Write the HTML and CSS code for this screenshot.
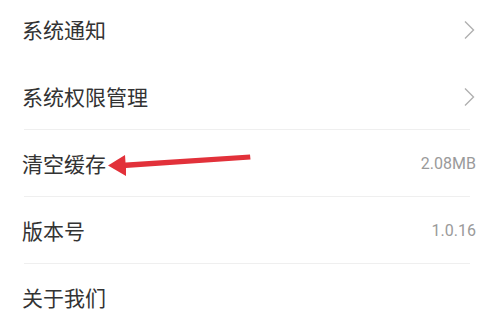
FILE: index.html
```html
<!DOCTYPE html>
<html lang="zh-CN">
<head>
  <meta charset="UTF-8">
  <meta name="viewport" content="width=device-width, initial-scale=1.0">
  <title>设置</title>
  <link rel="stylesheet" href="styles.css">
</head>
<body>
  <div class="settings">
    <div class="item">
      <span class="label">系统通知</span>
      <svg class="chevron" width="12" height="20" viewBox="0 0 12 20">
        <path d="M2 1.5 L10.5 10 L2 18.5" fill="none" stroke="#b0b0b0" stroke-width="1.4"/>
      </svg>
    </div>
    <div class="item line">
      <span class="label">系统权限管理</span>
      <svg class="chevron" width="12" height="20" viewBox="0 0 12 20">
        <path d="M2 1.5 L10.5 10 L2 18.5" fill="none" stroke="#b0b0b0" stroke-width="1.4"/>
      </svg>
    </div>
    <div class="item line">
      <span class="label">清空缓存</span>
      <span class="value">2.08MB</span>
    </div>
    <div class="item line">
      <span class="label">版本号</span>
      <span class="value">1.0.16</span>
    </div>
    <div class="item">
      <span class="label">关于我们</span>
    </div>

    <!-- red pointer drawn over the screenshot -->
    <svg class="pointer" width="496" height="324" viewBox="0 0 496 324">
      <path d="M250 154.5 L250.5 159.5 L126 168 L126 176 L108 165.5 L125 155 L125.5 162.5 Z" fill="#e2313a"/>
    </svg>
  </div>
</body>
</html>
```

FILE: styles.css
```css
body {
  margin: 0;
  padding: 0;
  background: #fff;
  font-family: "Noto Sans CJK SC", "Noto Sans", sans-serif;
  overflow: hidden;
}

.settings {
  position: relative;
  margin-top: -4px;
}

.item {
  display: flex;
  align-items: center;
  justify-content: space-between;
  height: 67px;
  box-sizing: border-box;
  padding: 0 20px 0 22px;
  position: relative;
}

.item.line::after {
  content: "";
  position: absolute;
  left: 24px;
  right: 26px;
  bottom: 0;
  height: 1px;
  background: #efefef;
}

.label {
  font-size: 21px;
  color: #333;
  line-height: 1;
}

.value {
  font-family: Roboto, "Noto Sans", sans-serif;
  font-size: 16px;
  color: #9a9a9a;
}

.chevron {
  display: block;
  margin-right: 1px;
}

.pointer {
  position: absolute;
  left: 0;
  top: 4px;
  pointer-events: none;
}
```
